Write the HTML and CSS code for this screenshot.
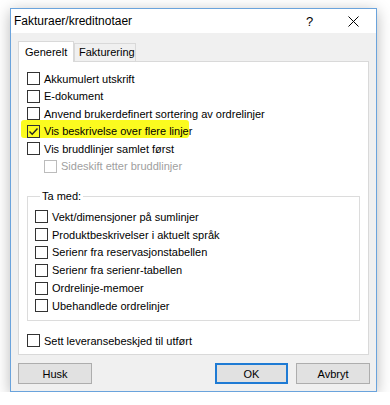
FILE: index.html
```html
<!DOCTYPE html>
<html lang="no">
<head>
    <meta charset="UTF-8">
    <title>Fakturaer/kreditnotaer</title>
    <link rel="stylesheet" href="styles.css">
</head>
<body>
    <div class="window">
        <div class="titlebar">
            <span class="title">Fakturaer/kreditnotaer</span>
            <span class="help">?</span>
            <span class="close">
                <svg width="11" height="11" viewBox="0 0 11 11">
                    <path d="M0.5 0.5 L10.5 10.5 M10.5 0.5 L0.5 10.5" stroke="#000" stroke-width="1" fill="none"/>
                </svg>
            </span>
        </div>

        <div class="dialog">
            <div class="tabs">
                <div class="tab active">Generelt</div>
                <div class="tab">Fakturering</div>
            </div>

            <div class="panel">
                <div class="check"><span class="box"></span>Akkumulert utskrift</div>
                <div class="check"><span class="box"></span>E-dokument</div>
                <div class="check"><span class="box"></span>Anvend brukerdefinert sortering av ordrelinjer</div>
                <div class="check marked">
                    <span class="marker"></span>
                    <span class="box">
                        <svg width="11" height="11" viewBox="0 0 11 11">
                            <path d="M1.5 5.5 L4.2 8.2 L9.5 2.5" stroke="#222" stroke-width="1.4" fill="none"/>
                        </svg>
                    </span>
                    <span class="label">Vis beskrivelse over flere linjer</span>
                </div>
                <div class="check"><span class="box"></span>Vis bruddlinjer samlet først</div>
                <div class="check sub disabled"><span class="box"></span>Sideskift etter bruddlinjer</div>

                <fieldset class="group">
                    <legend>Ta med:</legend>
                    <div class="check"><span class="box"></span>Vekt/dimensjoner på sumlinjer</div>
                    <div class="check"><span class="box"></span>Produktbeskrivelser i aktuelt språk</div>
                    <div class="check"><span class="box"></span>Serienr fra reservasjonstabellen</div>
                    <div class="check"><span class="box"></span>Serienr fra serienr-tabellen</div>
                    <div class="check"><span class="box"></span>Ordrelinje-memoer</div>
                    <div class="check"><span class="box"></span>Ubehandlede ordrelinjer</div>
                </fieldset>

                <div class="check last"><span class="box"></span>Sett leveransebeskjed til utført</div>
            </div>

            <div class="buttons">
                <button class="btn">Husk</button>
                <span class="spacer"></span>
                <button class="btn default">OK</button>
                <button class="btn">Avbryt</button>
            </div>
        </div>
    </div>
</body>
</html>
```

FILE: styles.css
```css
* {
    margin: 0;
    padding: 0;
    box-sizing: border-box;
}

body {
    font-family: 'Liberation Sans', Arial, sans-serif;
    font-size: 11px;
    color: #000;
    background: #ffffff;
    padding: 8px 0 0 10px;
}

.window {
    width: 367px;
    height: 384px;
    background: #f0f0f0;
    border: 1px solid #6aa3dc;
    box-shadow: 0 3px 14px rgba(0, 0, 0, 0.28);
    display: flex;
    flex-direction: column;
}

.titlebar {
    height: 24px;
    background: #ffffff;
    display: flex;
    align-items: center;
    padding-left: 3px;
}

.title {
    flex: 1;
    font-size: 12px;
}

.help {
    font-size: 13px;
    width: 16px;
    margin-right: 26px;
}

.close {
    width: 12px;
    height: 11px;
    margin-right: 16px;
    display: flex;
}

.dialog {
    flex: 1;
    padding: 8px 6px 0 7px;
}

.tabs {
    display: flex;
    align-items: flex-end;
    height: 20px;
}

.tab {
    height: 18px;
    width: 62px;
    border: 1px solid #d9d9d9;
    border-bottom: none;
    background: #f0f0f0;
    padding: 0 4px;
    line-height: 17px;
    text-align: center;
}

.tab.active {
    height: 21px;
    width: 56px;
    background: #ffffff;
    padding: 0 6px;
    line-height: 20px;
    position: relative;
    z-index: 1;
    margin-bottom: -1px;
}

.panel {
    width: 351px;
    height: 294px;
    background: #ffffff;
    border: 1px solid #d9d9d9;
    padding: 8px 8px 0 8px;
}

.check {
    display: flex;
    align-items: center;
    gap: 4px;
    height: 17.5px;
    white-space: nowrap;
    position: relative;
}

.box {
    width: 13px;
    height: 13px;
    flex: none;
    border: 1px solid #333333;
    background: #ffffff;
    display: flex;
}

.check.sub {
    margin-left: 17px;
}

.check.disabled {
    color: #a0a0a0;
}

.check.disabled .box {
    border-color: #bcbcbc;
}

.marked .box,
.marked .label {
    position: relative;
}

.marked .box {
    background: transparent;
}

.marker {
    position: absolute;
    left: -6px;
    top: -3px;
    width: 168px;
    height: 18px;
    background: #fbfb1f;
    border-radius: 3px;
}

.group {
    margin-top: 14px;
    border: 1px solid #dcdcdc;
    padding: 5px 7px 5px 7px;
    height: 132px;
}

.group legend {
    line-height: 14px;
    padding: 0 2px;
    margin-left: 5px;
}

.group .check {
    height: 17.8px;
}

.check.last {
    margin-top: 11px;
}

.buttons {
    display: flex;
    gap: 8px;
    margin-top: 8px;
}

.spacer {
    flex: 1;
}

.btn {
    width: 74px;
    height: 21px;
    font-family: inherit;
    font-size: 11px;
    color: #000;
    background: #e1e1e1;
    border: 1px solid #adadad;
}

.btn.default {
    width: 73px;
    border: 2px solid #1f7bd4;
}
```
